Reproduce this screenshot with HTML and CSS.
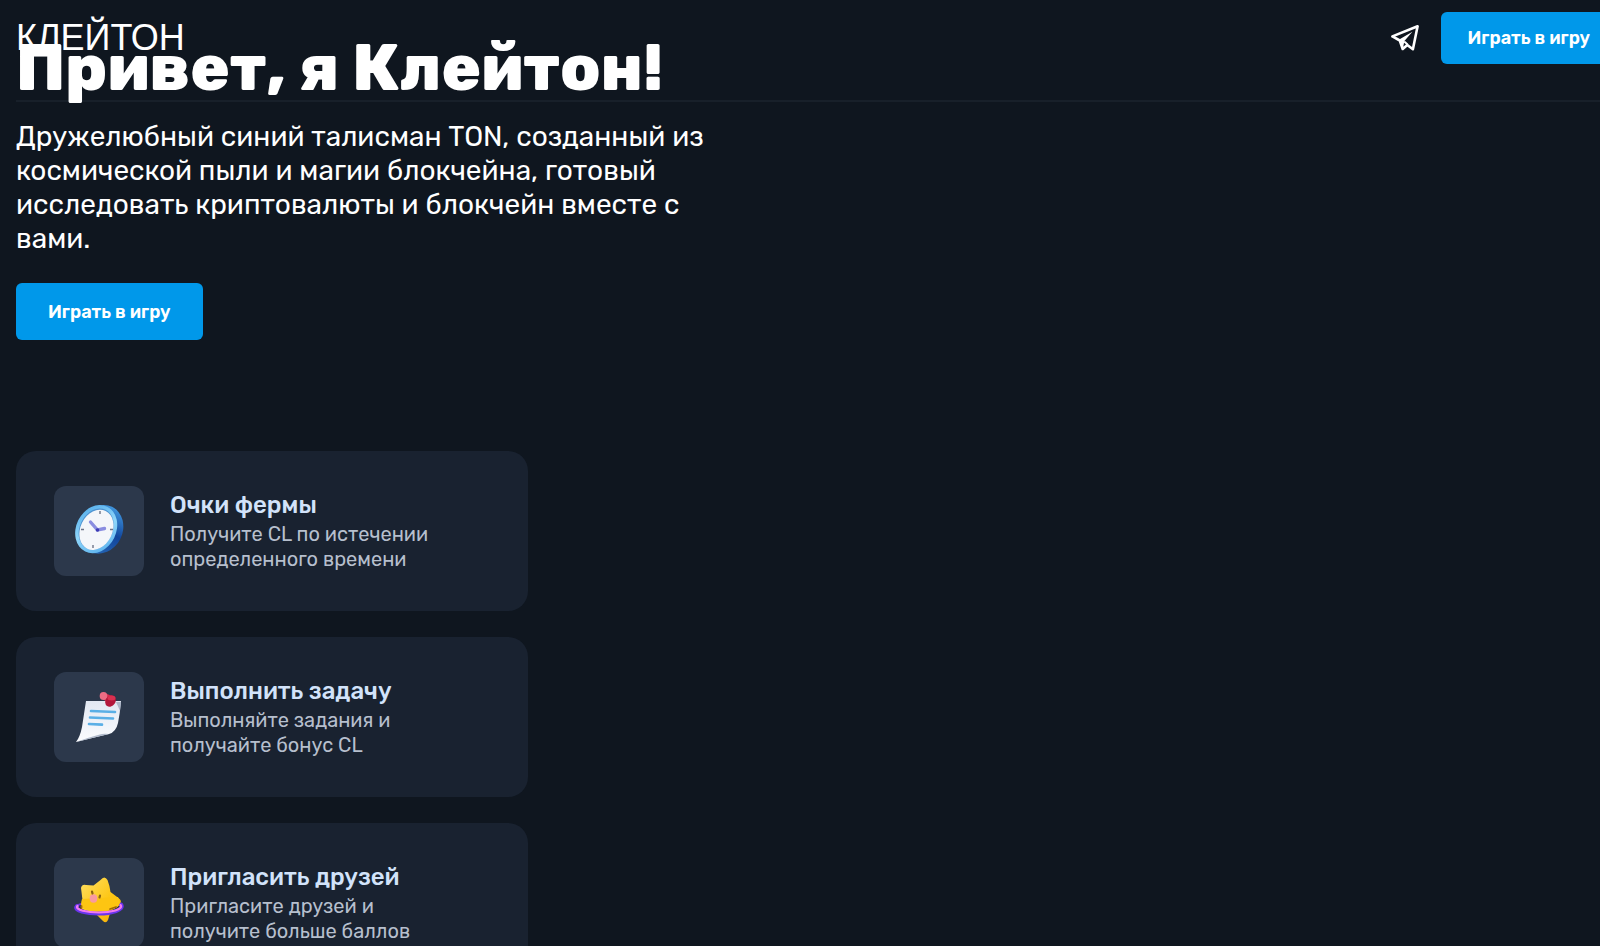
FILE: index.html
```
<!DOCTYPE html>
<html lang="ru">
<head>
    <meta charset="UTF-8">
    <meta name="viewport" content="width=device-width, initial-scale=1">
    <title>Клейтон</title>
    <link rel="stylesheet" href="styles.css">
</head>
<body>
    <header class="header">
        <a class="logo" href="#">КЛЕЙТОН</a>
        <div class="header-actions">
            <a class="telegram" href="#" aria-label="Telegram">
                <svg viewBox="0 0 28 26" width="28" height="26">
                    <path fill="none" stroke="#fff" stroke-width="2.6" stroke-linejoin="round" d="M26.6 1.3 1.4 11.4l7.4 4.1 2.9 8.5 4.6-4 5.6 4.2z"/>
                    <path fill="#fff" d="M8.2 14.4 21.4 6.8 13.4 16l-1.7 8.2z"/>
                    <path fill="none" stroke="#fff" stroke-width="2" stroke-linejoin="round" d="M13.2 16.4l3.4 3"/>
                </svg>
            </a>
            <button class="btn btn-small" type="button">Играть в игру</button>
        </div>
    </header>

    <main>
        <section class="hero">
            <h1>Привет, я Клейтон!</h1>
            <p>Дружелюбный синий талисман TON, созданный из космической пыли и магии блокчейна, готовый исследовать криптовалюты и блокчейн вместе с вами.</p>
            <button class="btn" type="button">Играть в игру</button>
        </section>

        <section class="cards">
            <article class="card">
                <div class="card-icon">
                    <svg viewBox="4 6 90 90" width="100%" height="100%">
                        <defs>
                            <linearGradient id="rim" x1="0" y1="0" x2="1" y2="1">
                                <stop offset="0" stop-color="#4aa6e8"/>
                                <stop offset=".5" stop-color="#8fd6fa"/>
                                <stop offset="1" stop-color="#4fa9ea"/>
                            </linearGradient>
                            <linearGradient id="side" x1="0" y1="0" x2="0" y2="1">
                                <stop offset="0" stop-color="#3f94dc"/>
                                <stop offset=".5" stop-color="#11459c"/>
                                <stop offset="1" stop-color="#2666b4"/>
                            </linearGradient>
                        </defs>
                        <g transform="rotate(26 48 50)">
                            <ellipse cx="50.5" cy="48" rx="21.5" ry="25" fill="url(#side)"/>
                            <ellipse cx="46" cy="50" rx="20" ry="25" fill="url(#rim)"/>
                            <ellipse cx="46" cy="50" rx="16.5" ry="21.5" fill="#4f94d2"/>
                            <ellipse cx="46.5" cy="50.5" rx="16" ry="21" fill="#f4f6fa"/>
                        </g>
                        <path stroke="#8a8de0" stroke-width="3.4" stroke-linecap="round" fill="none" d="M40.5 42l7 8 7-1.5"/>
                        <circle cx="47.5" cy="50" r="1.8" fill="#3d3bb5"/>
                        <path stroke="#6d7488" stroke-width="1.4" fill="none" d="M50 31v3M60 49.5h3M43 65v3M31 49.5h3"/>
                    </svg>
                </div>
                <div class="card-text">
                    <h2>Очки фермы</h2>
                    <p>Получите CL по истечении определенного времени</p>
                </div>
            </article>

            <article class="card">
                <div class="card-icon">
                    <svg viewBox="4 6 90 90" width="100%" height="100%">
                        <defs>
                            <linearGradient id="paper" x1="0" y1="0" x2="0" y2="1">
                                <stop offset="0" stop-color="#e2e8f2"/>
                                <stop offset="1" stop-color="#fbfcff"/>
                            </linearGradient>
                        </defs>
                        <path fill="url(#paper)" d="M36 35h35q-1 12-3 22-2 9-9 11-17 4-33 8 4-5 6-15z"/>
                        <path fill="#aeb8ca" d="M66 36h5l-1 9q-2-5-4-9zM26 76q14-5 22-7 6-2 11-1-17 4-33 8z"/>
                        <path stroke="#5aafe6" stroke-width="2.6" stroke-linecap="round" d="M41 45l24 1M40 51.500l23 1M39 58l13 .6"/>
                        <path fill="#d92a4c" d="M53 33l4-5 8 3-5 8z"/>
                        <ellipse cx="53.5" cy="30" rx="3.8" ry="4" fill="#ee6c84"/>
                        <ellipse cx="60.5" cy="35" rx="5" ry="6" fill="#b3173b" transform="rotate(35 60.5 35)"/>
                        <ellipse cx="61.5" cy="32" rx="4" ry="2.500" fill="#d9304f"/>
                    </svg>
                </div>
                <div class="card-text">
                    <h2>Выполнить задачу</h2>
                    <p>Выполняйте задания и получайте бонус CL</p>
                </div>
            </article>

            <article class="card">
                <div class="card-icon">
                    <svg viewBox="4 7 90 90" width="100%" height="100%">
                        <defs>
                            <linearGradient id="star" x1="0" y1="0" x2="1" y2="1">
                                <stop offset="0" stop-color="#ffdf63"/>
                                <stop offset=".6" stop-color="#fdc512"/>
                                <stop offset="1" stop-color="#f3a708"/>
                            </linearGradient>
                        </defs>
                        <ellipse cx="48.5" cy="56.5" rx="23" ry="5.500" fill="none" stroke="#7437e0" stroke-width="2"/>
                        <path fill="url(#star)" d="M43.500 34.500l7-5.500q4-5 7 0 2 5 3 12l8 6q4 3 1.500 6-3 4-9 6l-3 10q-2 4-5 1l-7-7-14-5q-2-2-.5-5l1-4-1.500-12q1-4 5-3z"/>
                        <path fill="none" stroke="#6a35ee" stroke-width="4" stroke-linecap="round" d="M27 55c-4 5 10 7.500 22 7.500s26-3.500 22-9"/>
                        <path fill="none" stroke="#f27af0" stroke-width="2.200" stroke-linecap="round" d="M27.500 55c-3 4 10 6.500 21.500 6.500s25-3 21.500-7.500"/>
                        <path fill="#fdc512" d="M32 48l36-2 2 6q-2 5-8 6.500-20 4-29-1.500-3-3-1-9z"/>
                        <ellipse cx="43.5" cy="47.5" rx="3.8" ry="4.200" fill="#f99aa0"/>
                        <path stroke="#8a6212" stroke-width="2.200" stroke-linecap="round" d="M42 40.5l.5 2M50 44.5l-.5 2"/>
                        <path stroke="#a36b08" stroke-width="1.800" stroke-linecap="round" d="M60 58l6-2M31.5 55v2"/>
                    </svg>
                </div>
                <div class="card-text">
                    <h2>Пригласить друзей</h2>
                    <p>Пригласите друзей и получите больше баллов</p>
                </div>
            </article>
        </section>
    </main>
</body>
</html>
```
FILE: styles.css
```
* {
    box-sizing: border-box;
    margin: 0;
    padding: 0;
}

html {
    height: 100%;
    overflow: hidden;
}

body {
    position: relative;
    height: 100%;
    overflow: hidden;
    padding: 0 16px;
    background: #0f161f;
    color: #fff;
    font-family: Rubik, Roboto, "Noto Sans", sans-serif;
}

/* Шапка лежит поверх первого экрана */
.header {
    position: absolute;
    top: 0;
    left: 16px;
    right: -16px;
    display: flex;
    justify-content: space-between;
    align-items: center;
    padding: 12px 0 36px;
    border-bottom: 2px solid #18202a;
}

.logo {
    color: #fff;
    font-family: "Liberation Sans", Arial, sans-serif;
    font-size: 36px;
    line-height: 52px;
    text-decoration: none;
}

.header-actions {
    display: flex;
    align-items: center;
    gap: 22px;
}

.telegram {
    display: flex;
}

.btn {
    height: 57px;
    padding: 0 32px;
    border: none;
    border-radius: 6px;
    background: #0098ea;
    color: #fff;
    font-family: inherit;
    font-size: 18px;
    font-weight: 600;
    cursor: pointer;
}

.btn-small {
    height: 52px;
    padding: 0 26px;
}

.hero {
    position: relative;
    max-width: 712px;
    padding-top: 30px;
}

.hero h1 {
    font-size: 65px;
    font-weight: 800;
    line-height: 76px;
    white-space: nowrap;
}

.hero p {
    margin: 14px 0 27px;
    font-size: 28px;
    line-height: 34px;
}

.cards {
    display: flex;
    flex-direction: column;
    gap: 26px;
    max-width: 512px;
    margin-top: 111px;
}

.card {
    display: flex;
    align-items: center;
    gap: 26px;
    min-height: 160px;
    padding: 0 38px;
    border-radius: 20px;
    background: #192230;
}

.card-icon {
    flex: none;
    width: 90px;
    height: 90px;
    border-radius: 12px;
    background: #2c384b;
}

.card-text {
    max-width: 284px;
}

.card h2 {
    margin-bottom: 2px;
    color: #d2e3fa;
    font-size: 24px;
    font-weight: 500;
    line-height: 30px;
}

.card p {
    color: #b6bfcd;
    font-size: 20px;
    line-height: 25px;
}
```
